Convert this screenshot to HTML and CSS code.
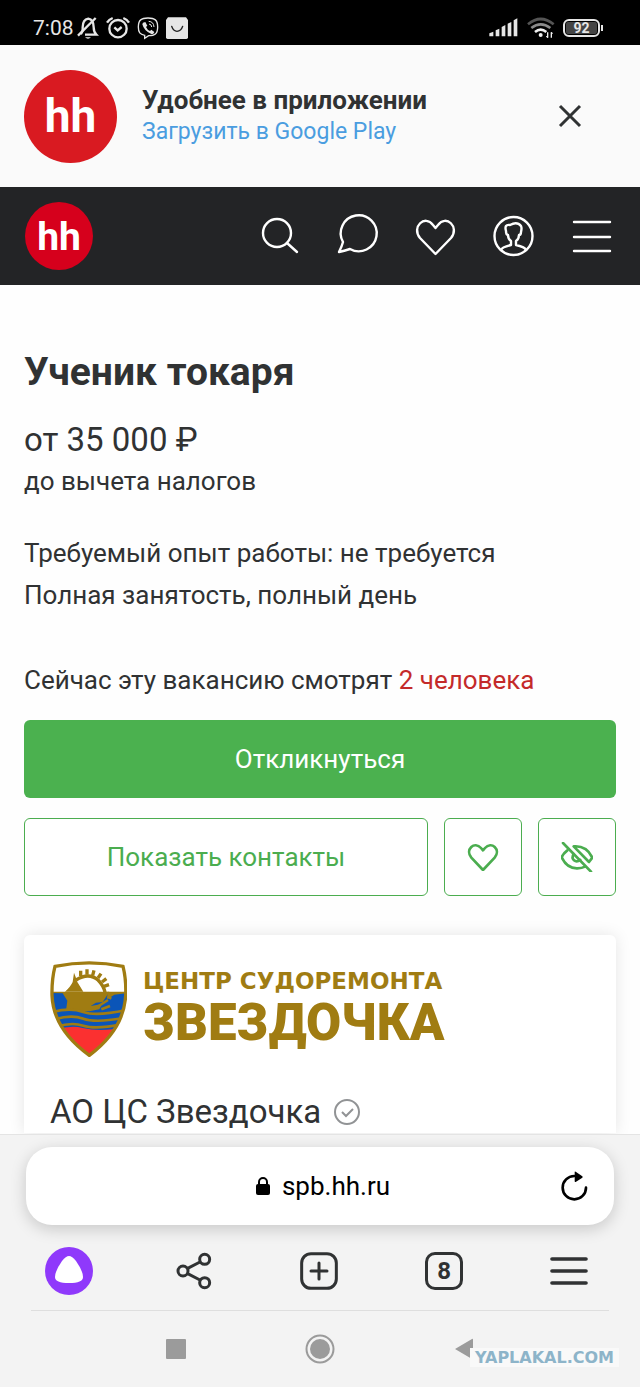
FILE: index.html
```html
<!DOCTYPE html>
<html lang="ru">
<head>
  <meta charset="UTF-8" />
  <meta name="viewport" content="width=device-width, initial-scale=1" />
  <title>Ученик токаря</title>
  <link rel="stylesheet" href="styles.css">
</head>
<body>
  <div class="status-bar">
    <div class="status-left">
      <span class="time">7:08</span>
      <svg width="22" height="24" viewBox="228 48 66 72" fill="none" stroke="#e6e6e6" stroke-width="7">
        <path d="M240 102 C246 97 245 92 245 82 C245 66 251 58 262 56 C274 58 278 66 278 82 C278 94 280 98 286 104 H252" />
        <path d="M231 107 L284 54" />
        <path d="M252 112 H270 Q261 120 252 112 Z" fill="#e6e6e6" stroke="none" />
      </svg>
      <svg width="24" height="24" viewBox="315 48 72 72" fill="none" stroke="#e6e6e6" stroke-width="7">
        <circle cx="351" cy="86" r="26" />
        <path d="M318 68 Q324 58 335 54 M384 68 Q378 58 367 54" />
        <path d="M340 82 L350 91 L362 81" />
      </svg>
      <svg width="22" height="24" viewBox="409 48 66 72" fill="none" stroke="#e6e6e6" stroke-width="4">
        <path d="M442 54 C462 54 471 60 471 81 C471 102 462 107 444 107 L432 115 V106 C418 103 413 98 413 81 C413 60 422 54 442 54 Z" />
        <path d="M427 68 L434 66 L440 77 L436 81 Q440 90 448 93 L452 89 L461 96 Q459 104 452 102 Q430 93 425 73 Z" fill="#e6e6e6" stroke="none" />
        <path d="M444 64 Q459 65 460 81 M445 72 Q453 73 453 81" stroke-width="3" />
      </svg>
      <svg width="22" height="24" viewBox="498 48 66 72" fill="none">
        <path d="M504 52 H558 L564 60 V112 Q564 117 559 117 H503 Q498 117 498 112 V60 Z" fill="#e6e6e6" />
        <path d="M515 79 Q520 94 531 94 Q543 94 548 79" stroke="#222" stroke-width="4" stroke-linecap="round" />
      </svg>
    </div>
    <div class="status-right">
      <svg width="30" height="20" viewBox="150 56 90 60" fill="#e6e6e6">
        <path d="M151 102 L163 97 V111 H151 Z M170 93 L181 88 V111 H170 Z M188 83 L199 77 V111 H188 Z M206 73 L217 68 V111 H206 Z M224 63 L235 57 V111 H224 Z" />
      </svg>
      <svg width="28" height="22" viewBox="258 52 84 66" fill="none" stroke-width="8">
        <path d="M261 74 Q299 42 338 74" stroke="#555" />
        <path d="M271 85 Q299 63 328 85" stroke="#8a8a8a" />
        <path d="M282 97 Q299 83 316 97" stroke="#f0f0f0" />
        <circle cx="299" cy="106" r="6" fill="#f0f0f0" />
        <path d="M320 98 V114 M331 98 V114" stroke="#f0f0f0" stroke-width="4" />
        <path d="M316 109 L320 115 M335 102 L331 97" stroke="#f0f0f0" stroke-width="3" />
      </svg>
      <div class="battery"><span>92</span></div>
    </div>
  </div>

  <div class="app-banner">
    <div class="hh-logo big">hh</div>
    <div class="banner-text">
      <b>Удобнее в приложении</b>
      <a href="#">Загрузить в Google Play</a>
    </div>
    <button type="button" class="close" aria-label="Закрыть">
      <svg width="24" height="24" viewBox="0 0 24 24" fill="none" stroke="#303233" stroke-width="3">
        <path d="M2 2 L22 22 M22 2 L2 22" />
      </svg>
    </button>
  </div>

  <header class="navbar">
    <a href="#" class="hh-logo">hh</a>
    <nav>
      <a href="#" aria-label="Поиск">
        <svg viewBox="0 0 40 40"><circle cx="17" cy="17" r="14" /><path d="M27 27 L37 36" /></svg>
      </a>
      <a href="#" aria-label="Чаты">
        <svg viewBox="0 0 40 40"><path d="M5 26 A18 18 0 1 1 12 33 Q6 35 1 36 Q4 30 5 26 Z" /></svg>
      </a>
      <a href="#" aria-label="Избранное">
        <svg viewBox="0 0 40 40"><path d="M19.500 38 L4 22 C-5 11 9 -2 17 9 L19.500 12 L22 9 C30 -2 44 11 35 22 Z" /></svg>
      </a>
      <a href="#" aria-label="Профиль">
        <svg viewBox="0 0 40 40">
          <circle cx="19.500" cy="20" r="19" />
          <path d="M7 34 Q8 31 17 29 V25 Q14 23 14 19 Q12 19 12 15 Q10 8 16 9 Q23 5 27 10 Q28 12 27 16 Q27 19 25 19 Q25 23 22 25 V29 Q31 31 32 34" />
        </svg>
      </a>
      <button type="button" aria-label="Меню">
        <svg viewBox="0 0 40 40"><path d="M2 6 H38 M2 21 H38 M2 35 H38" /></svg>
      </button>
    </nav>
  </header>

  <main>
    <h1>Ученик токаря</h1>
    <p class="salary">от 35 000 ₽</p>
    <p>до вычета налогов</p>
    <div class="conditions">
      <p>Требуемый опыт работы: не требуется</p>
      <p>Полная занятость, полный день</p>
    </div>
    <p class="viewers">Сейчас эту вакансию смотрят <span>2 человека</span></p>

    <button type="button" class="btn btn-main">Откликнуться</button>
    <div class="actions">
      <button type="button" class="btn btn-line">Показать контакты</button>
      <button type="button" class="btn btn-line btn-icon" aria-label="В избранное">
        <svg width="32" height="28" viewBox="140 130 96 84">
          <path d="M188 211 L153 174 C133 149 163 123 182 145 L188 152 L194 145 C213 123 243 149 223 174 Z" />
        </svg>
      </button>
      <button type="button" class="btn btn-line btn-icon" aria-label="Скрыть вакансию">
        <svg width="32" height="30" viewBox="423 124 96 90">
          <path d="M429 127 L513 213" />
          <path d="M442 149 Q430 158 425 170 Q441 204 472 203 Q486 203 495 198" />
          <path d="M461 137 Q500 134 517 171 L507 184 Z" />
          <path d="M461 160 Q454 171 462 179 Q470 186 481 178" />
        </svg>
      </button>
    </div>

    <section class="company">
      <div class="company-logo">
        <svg width="77" height="96" viewBox="12 15 231 288">
          <defs>
            <clipPath id="shield">
              <path d="M27 31 Q130 10 231 31 Q241 70 239 118 Q234 220 130 298 Q22 220 18 118 Q17 70 27 31 Z" />
            </clipPath>
          </defs>
          <g clip-path="url(#shield)">
            <rect x="12" y="15" width="231" height="95" fill="#fff" />
            <rect x="12" y="108" width="231" height="120" fill="#0b55b8" />
            <path d="M20 225 Q70 206 110 216 T200 220 L243 210 V303 H12 Z" fill="#fb3030" />
            <!-- ship and star -->
            <path d="M14 107 H190 L170 138 L150 140 L134 150 L168 144 L160 160 L130 166 L60 164 L64 134 L50 112 L14 111 Z" fill="#a07c12" />
            <path d="M184 107 H243 V111 L205 116 L184 130 Z" fill="#a07c12" />
            <path d="M57 107 Q74 92 80 78 L84 50 Q90 64 94 78 L112 107 Z" fill="#a07c12" />
            <path d="M90 72 Q128 48 156 72 Q174 90 178 112" fill="none" stroke="#a07c12" stroke-width="10" />
            <path d="M104 44 V60 M123 40 V56 M144 43 L140 58 M165 53 L156 66 M181 68 L168 78 M189 86 L174 91" stroke="#a07c12" stroke-width="10" />
            <path d="M158 150 L186 132 M166 160 L192 150 M184 122 L196 128" stroke="#a07c12" stroke-width="8" />
            <!-- waves -->
            <g fill="none" stroke="#a07c12" stroke-width="8">
              <path d="M20 168 Q74 154 112 168 T243 162" />
              <path d="M20 192 Q74 174 112 188 T243 184" />
              <path d="M20 216 Q74 196 112 209 T243 202" />
            </g>
          </g>
          <path d="M27 31 Q130 10 231 31 Q241 70 239 118 Q234 220 130 298 Q22 220 18 118 Q17 70 27 31 Z" fill="none" stroke="#a07c12" stroke-width="10" />
        </svg>
        <div class="company-title">
          <span class="line-top">ЦЕНТР СУДОРЕМОНТА</span>
          <span class="line-name">ЗВЕЗДОЧКА</span>
        </div>
      </div>
      <h2>
        АО ЦС Звездочка
        <svg width="26" height="26" viewBox="0 0 26 26" fill="none" stroke="#919395">
          <circle cx="13" cy="13" r="12" stroke-width="2" />
          <path d="M8 13 L12 17 L19 10" stroke-width="2" />
        </svg>
      </h2>
    </section>
  </main>

  <footer class="browser">
    <div class="address">
      <div class="host">
        <svg width="14" height="18" viewBox="0 0 14 18">
          <rect y="7" width="14" height="11" rx="2" />
          <path d="M3 8 V5 A4 4 0 0 1 11 5 V8" fill="none" stroke="#000" stroke-width="2" />
        </svg>
        <span>spb.hh.ru</span>
      </div>
      <button type="button" aria-label="Обновить">
        <svg width="28" height="30" viewBox="724 123 84 90">
          <path d="M799 173 A35 35 0 1 1 764 138" fill="none" stroke="#000" stroke-width="8" stroke-linecap="round" />
          <path d="M765 126 Q765 123 768 125 L788 139 Q790 141 788 143 L768 156 Q765 157 765 154 Z" />
        </svg>
      </button>
    </div>

    <div class="toolbar">
      <button type="button" aria-label="Алиса">
        <svg width="48" height="48" viewBox="0 0 48 48">
          <circle cx="24" cy="24" r="24" fill="#8f39fb" />
          <path d="M24 9 Q27 9 31 14 Q38 24 38 30 Q38 36 24 36 Q10 36 10 30 Q10 24 17 14 Q21 9 24 9 Z" fill="#fff" />
        </svg>
      </button>
      <button type="button" aria-label="Поделиться">
        <svg class="tool" width="36" height="38" viewBox="526 366 108 114">
          <circle cx="547" cy="423" r="15" />
          <circle cx="612" cy="388" r="15" />
          <circle cx="612" cy="458" r="15" />
          <path d="M561 415 L598 396 M561 431 L598 450" />
        </svg>
      </button>
      <button type="button" aria-label="Новая вкладка">
        <svg class="tool" width="38" height="38" viewBox="0 0 114 114">
          <rect x="5" y="5" width="104" height="104" rx="28" />
          <path d="M57 33 V81 M33 57 H81" stroke-linecap="round" />
        </svg>
      </button>
      <button type="button" class="tabs" aria-label="Вкладки: 8"><span>8</span></button>
      <button type="button" aria-label="Меню браузера">
        <svg class="tool" width="38" height="38" viewBox="0 0 114 114">
          <path d="M6 21 H108 M6 57 H108 M6 93 H108" stroke-width="11" stroke-linecap="round" />
        </svg>
      </button>
    </div>

    <div class="system-nav">
      <button type="button" aria-label="Недавние"><svg width="20" height="20"><rect width="20" height="20" rx="1" fill="#9b9b9b" /></svg></button>
      <button type="button" aria-label="Домой">
        <svg width="30" height="30" viewBox="0 0 30 30">
          <circle cx="15" cy="15" r="13.500" fill="none" stroke="#9b9b9b" stroke-width="2" />
          <circle cx="15" cy="15" r="10" fill="#9b9b9b" />
        </svg>
      </button>
      <button type="button" aria-label="Назад"><svg width="20" height="22"><path d="M1 11 L18 1 Q19 0 19 2 V20 Q19 22 18 21 Z" fill="#9b9b9b" /></svg></button>
    </div>
    <span class="watermark">YAPLAKAL.COM</span>
  </footer>
</body>
</html>
```
FILE: styles.css
```css
* {
  box-sizing: border-box;
}

body {
  margin: 0;
  min-height: 100vh;
  display: flex;
  flex-direction: column;
  font-family: Roboto, "Liberation Sans", sans-serif;
  font-size: 26px;
  line-height: 42px;
  color: #303233;
  background-color: #fefefe;
}

svg {
  display: block;
  flex-shrink: 0;
}

a {
  text-decoration: none;
}

button {
  font: inherit;
  padding: 0;
  border: none;
  background: none;
  cursor: pointer;
}

h1,
h2,
p {
  margin: 0;
}

/* status bar */
.status-bar {
  display: flex;
  justify-content: space-between;
  height: 45px;
  padding: 12px 40px 0 33px;
  background-color: #000;
  color: #e6e6e6;
}

.status-left,
.status-right {
  display: flex;
  align-items: center;
  height: 32px;
  gap: 8px;
}

.status-left {
  gap: 7px;
}

.time {
  font-size: 21px;
  line-height: 24px;
  margin-right: -4px;
}

.battery {
  position: relative;
  width: 37px;
  height: 18px;
  border: 2px solid #e6e6e6;
  border-radius: 6px;
  padding: 1px;
}

.battery span {
  display: block;
  background-color: #444;
  border-radius: 2px;
  font-size: 14px;
  font-weight: bold;
  line-height: 12px;
  text-align: center;
}

.battery::after {
  content: "";
  position: absolute;
  right: -5px;
  top: 4px;
  width: 2px;
  height: 6px;
  background-color: #e6e6e6;
}

/* app banner */
.app-banner {
  display: flex;
  align-items: center;
  height: 142px;
  padding: 0 58px 0 24px;
  background-color: #fafafa;
}

.hh-logo {
  width: 68px;
  height: 68px;
  border-radius: 50%;
  background-color: #d6001c;
  color: #fff;
  font-size: 39px;
  font-weight: bold;
  line-height: 70px;
  text-align: center;
}

.hh-logo.big {
  width: 93px;
  height: 93px;
  background-color: #d91a21;
  font-size: 46px;
  line-height: 92px;
}

.banner-text {
  flex: 1;
  margin-left: 25px;
  display: flex;
  flex-direction: column;
  font-size: 23px;
  line-height: 32px;
}

.banner-text b {
  font-size: 26px;
}

.banner-text a {
  color: #4a9de0;
}

/* header */
.navbar {
  display: flex;
  align-items: center;
  justify-content: space-between;
  height: 98px;
  padding: 0 28px 0 25px;
  background-color: #232426;
}

.navbar nav {
  display: flex;
  gap: 38px;
}

.navbar svg {
  width: 40px;
  height: 40px;
  overflow: visible;
  fill: none;
  stroke: #fff;
  stroke-width: 2.4;
  stroke-linecap: round;
  stroke-linejoin: round;
}

/* vacancy */
main {
  flex: 1;
  padding: 63px 24px 0;
}

h1 {
  font-size: 39px;
  line-height: 48px;
}

.salary {
  margin-top: 24px;
  font-size: 33px;
  line-height: 40px;
}

.conditions {
  margin-top: 30px;
}

.viewers {
  margin-top: 43px;
}

.viewers span {
  color: #c42a2a;
}

.btn {
  height: 78px;
  border-radius: 6px;
}

.btn-main {
  display: block;
  width: 100%;
  margin-top: 19px;
  background-color: #4bb14f;
  color: #fff;
}

.actions {
  display: flex;
  gap: 16px;
  margin-top: 20px;
}

.btn-line {
  flex: 1;
  border: 1px solid #4bad4f;
  background-color: #fff;
  color: #4bad4f;
}

.btn-icon {
  flex: 0 0 78px;
  display: flex;
  align-items: center;
  justify-content: center;
}

.btn-icon svg {
  fill: none;
  stroke: #4bad4f;
  stroke-width: 8;
  stroke-linejoin: round;
  stroke-linecap: round;
}

.company {
  margin-top: 39px;
  padding: 26px 26px 0;
  border-radius: 6px 6px 0 0;
  background-color: #fff;
  box-shadow: 0 0 16px rgba(0, 0, 0, 0.1);
}

.company-logo {
  display: flex;
  gap: 16px;
}

.company-title {
  display: flex;
  flex-direction: column;
  padding-top: 6px;
  color: #a07c12;
  white-space: nowrap;
}

.line-top {
  font-family: "DejaVu Sans", sans-serif;
  font-size: 23px;
  font-weight: bold;
  line-height: 28px;
}

.line-name {
  font-size: 51px;
  font-weight: 900;
  line-height: 56px;
}

.company h2 {
  display: flex;
  align-items: center;
  gap: 13px;
  margin-top: 33px;
  font-size: 33px;
  font-weight: normal;
  line-height: 43px;
}

/* browser panel */
.browser {
  position: relative;
  padding: 12px 26px 0;
  border-top: 1px solid #e4e4e4;
  background-color: #f3f3f3;
}

.address {
  display: flex;
  align-items: center;
  height: 78px;
  padding: 0 25px;
  border-radius: 26px;
  background-color: #fff;
  box-shadow: 0 4px 16px rgba(0, 0, 0, 0.18);
  color: #000;
}

.host {
  flex: 1;
  display: flex;
  align-items: center;
  justify-content: center;
  gap: 12px;
  padding-left: 34px;
}

.toolbar {
  display: grid;
  grid-template-columns: repeat(5, 1fr);
  height: 85px;
  margin: 0 -18px 0 -20px;
  padding-top: 7px;
}

.toolbar button {
  display: flex;
  align-items: center;
  justify-content: center;
}

.tool {
  fill: none;
  stroke: #303233;
  stroke-width: 9;
}

.tabs span {
  width: 38px;
  height: 38px;
  border: 3px solid #303233;
  border-radius: 10px;
  color: #303233;
  font-size: 24px;
  font-weight: bold;
  line-height: 32px;
}

.system-nav {
  display: grid;
  grid-template-columns: repeat(3, 144px);
  justify-content: center;
  height: 77px;
  margin: 0 5px;
  border-top: 1px solid #dedede;
}

.system-nav button {
  display: flex;
  align-items: center;
  justify-content: center;
}

.watermark {
  position: absolute;
  right: 21px;
  bottom: 20px;
  padding: 0 5px;
  background-color: #f9f9f9;
  color: #8db4c9;
  font-family: "DejaVu Sans", sans-serif;
  font-size: 16px;
  font-weight: bold;
  line-height: 19px;
}
```
